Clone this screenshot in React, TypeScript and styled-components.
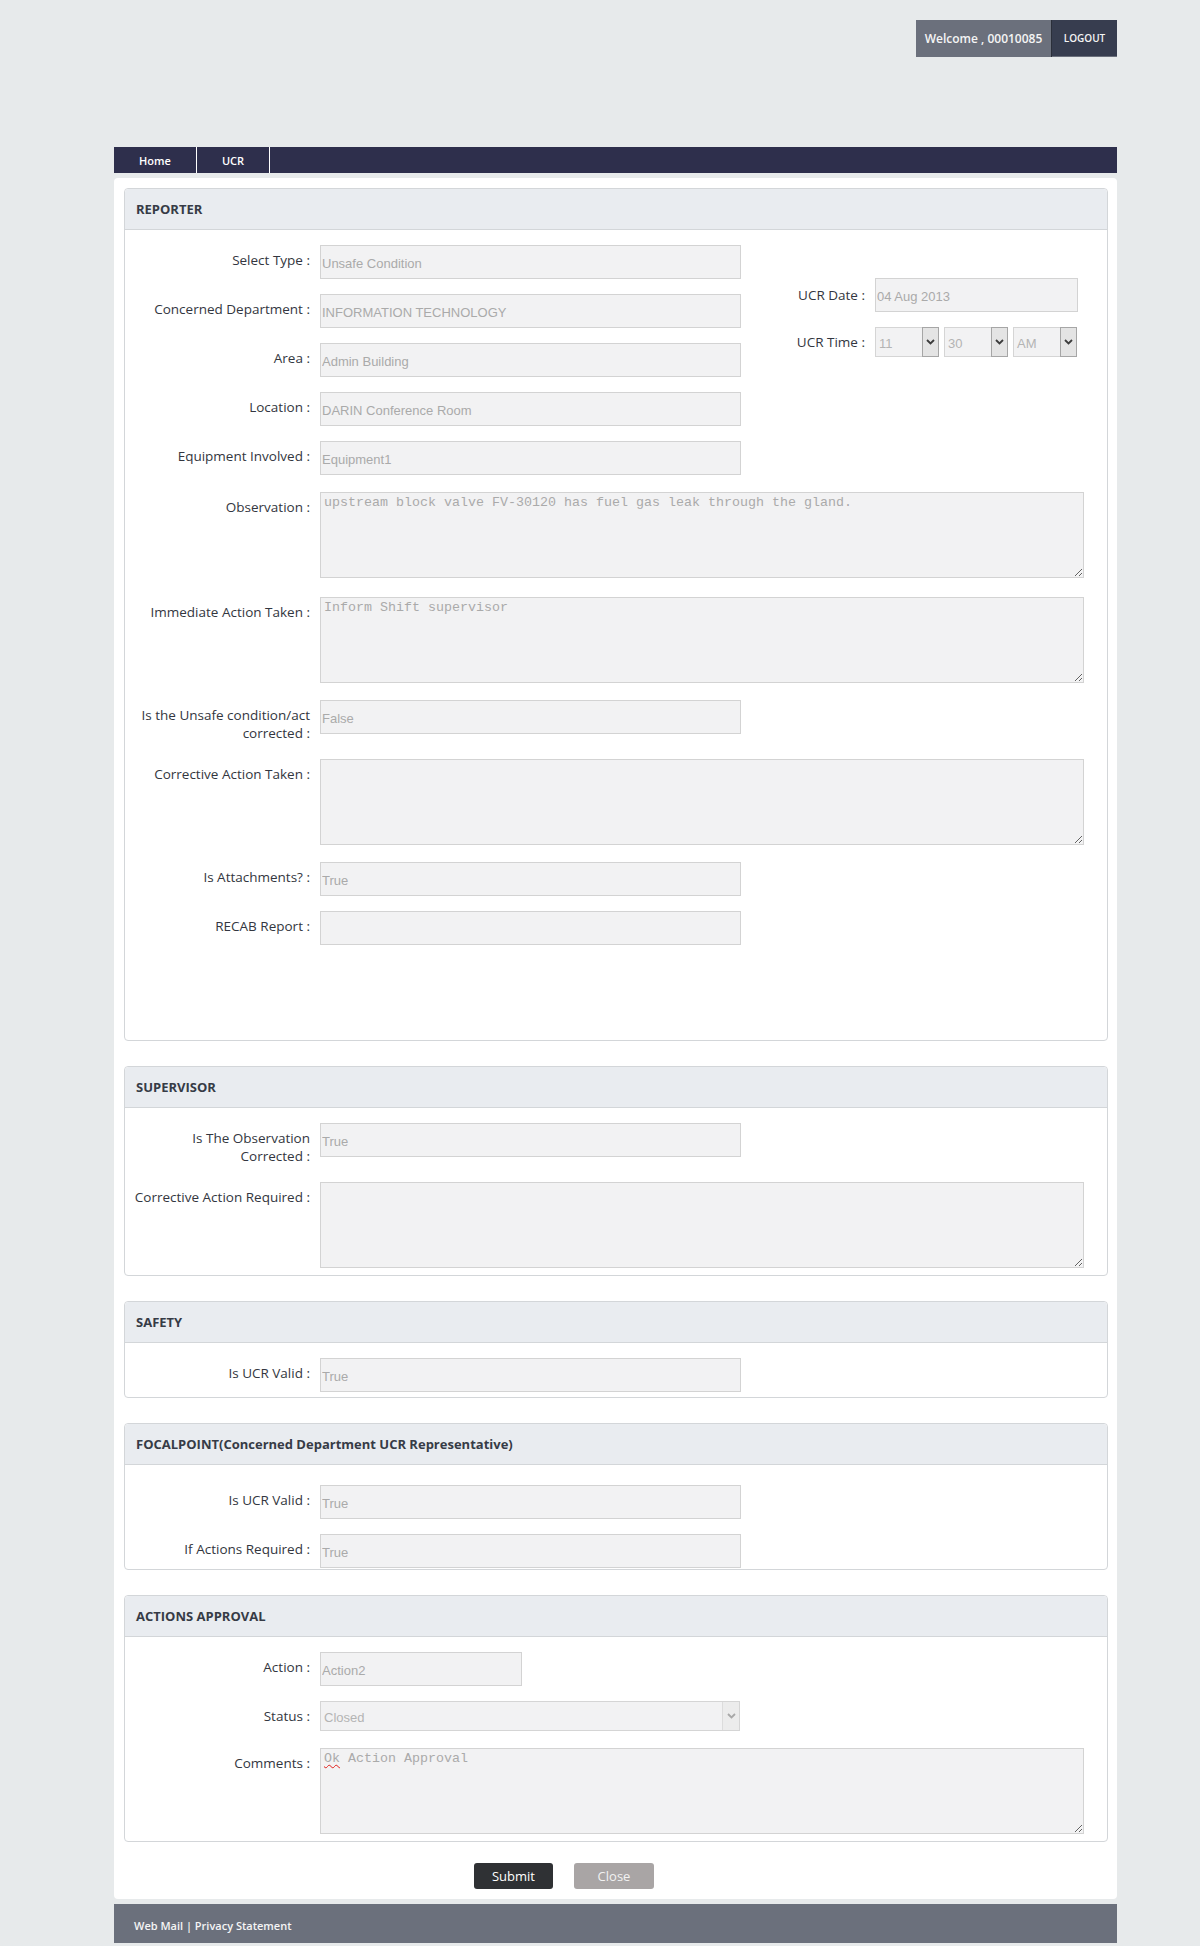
import styled, { createGlobalStyle } from 'styled-components';

const GlobalStyle = createGlobalStyle`
    body {
        margin: 0;
        background: #e7eaeb;
        font-family: 'Open Sans', 'Liberation Sans', sans-serif;
    }
`;

const StyledPage = styled.div`
    width: 1003px;
    margin-left: 114px;
    padding: 20px 0 3px;
`;

const StyledTopBar = styled.div`
    display: flex;
    justify-content: flex-end;
    height: 37px;
    margin-bottom: 90px;
`;

const StyledWelcome = styled.div`
    width: 135px;
    background: #6b707c;
    color: #f5f5f5;
    font-size: 12px;
    font-weight: 600;
    line-height: 37px;
    text-align: center;
    border-right: 1px solid #2b2f3a;
`;

const StyledLogout = styled.div`
    width: 65px;
    background: #373d4f;
    color: #f5f5f5;
    font-size: 10px;
    font-weight: 600;
    line-height: 37px;
    text-align: center;
    box-sizing: border-box;
    border-bottom: 1px solid #6b707c;
`;

const StyledNav = styled.div`
    display: flex;
    height: 26px;
    background: #2e2f4c;
`;

const StyledTab = styled.div<{ $width: number }>`
    width: ${(p) => p.$width}px;
    box-sizing: border-box;
    border-right: 1px solid #ffffff;
    color: #ffffff;
    font-size: 11px;
    font-weight: 600;
    display: flex;
    align-items: center;
    justify-content: center;
`;

const StyledPanel = styled.div`
    margin-top: 5px;
    background: #ffffff;
    border-radius: 4px;
    padding: 10px 9px 10px 10px;
`;

const StyledSectionStack = styled.div`
    display: flex;
    flex-direction: column;
    gap: 25px;
`;

const StyledSection = styled.div`
    border: 1px solid #d3d6d9;
    border-radius: 4px;
`;

const StyledSectionHeader = styled.div`
    height: 40px;
    line-height: 40px;
    background: #e9ecf0;
    border-bottom: 1px solid #d3d6d9;
    border-radius: 4px 4px 0 0;
    padding-left: 11px;
    color: #363b46;
    font-size: 13px;
    font-weight: 700;
`;

const StyledSectionBody = styled.div<{ $top?: number; $bottom?: number }>`
    display: flex;
    flex-direction: column;
    gap: 15px;
    padding-top: ${(p) => p.$top ?? 15}px;
    padding-bottom: ${(p) => p.$bottom ?? 5}px;
`;

const StyledTopArea = styled.div`
    display: flex;
`;

const StyledColumn = styled.div`
    display: flex;
    flex-direction: column;
    gap: 15px;
`;

const StyledSideColumn = styled.div`
    display: flex;
    flex-direction: column;
    gap: 15px;
    margin-left: 44px;
    padding-top: 33px;
`;

const StyledRow = styled.div<{ $tall?: boolean }>`
    display: flex;
    align-items: flex-start;
    margin: ${(p) => (p.$tall ? '2px 0 2px' : '0')};
`;

const StyledSideRow = styled.div`
    display: flex;
    align-items: center;
`;

const StyledLabel = styled.div`
    width: 185px;
    flex: 0 0 185px;
    padding: 6px 10px 0 0;
    text-align: right;
    white-space: nowrap;
    color: #333640;
    font-size: 13.5px;
    line-height: 18px;
`;

const StyledSideLabel = styled.div`
    width: 80px;
    padding-right: 10px;
    text-align: right;
    white-space: nowrap;
    color: #333640;
    font-size: 13.5px;
`;

const StyledInput = styled.input<{ $width?: number }>`
    box-sizing: border-box;
    width: ${(p) => p.$width ?? 421}px;
    height: 34px;
    margin: 0;
    padding: 2px 0 0 1px;
    background: #f2f2f3;
    border: 1px solid #d3d3d3;
    color: #aaaaaa;
    font-family: 'Liberation Sans', Arial, sans-serif;
    font-size: 13px;
    outline: none;
`;

const StyledAreaWrap = styled.div`
    position: relative;
`;

const StyledTextArea = styled.textarea`
    display: block;
    box-sizing: border-box;
    width: 764px;
    height: 86px;
    margin: 0;
    padding: 2px 3px;
    background: #f2f2f3;
    border: 1px solid #d3d3d3;
    color: #aaaaaa;
    font-family: 'Liberation Mono', 'Courier New', monospace;
    font-size: 13.33px;
    outline: none;
`;

/* spell-check squiggle drawn over the first word of a textarea */
const StyledSquiggle = styled.span`
    position: absolute;
    left: 4px;
    top: 3px;
    color: transparent;
    font-family: 'Liberation Mono', 'Courier New', monospace;
    font-size: 13.33px;
    line-height: normal;
    text-decoration: underline wavy #e0201c;
    text-decoration-thickness: 1px;
    text-underline-offset: 2px;
    pointer-events: none;
`;

const StyledSelect = styled.div<{ $width: number; $height: number }>`
    display: flex;
    box-sizing: border-box;
    width: ${(p) => p.$width}px;
    height: ${(p) => p.$height}px;
    background: #f2f2f3;
    border: 1px solid #d5d5d5;
    color: #b4b4b4;
    font-family: 'Liberation Sans', Arial, sans-serif;
    font-size: 13px;
`;

const StyledSelectValue = styled.span`
    flex: 1;
    display: flex;
    align-items: center;
    padding: 2px 0 0 3px;
`;

const StyledArrowBox = styled.span<{ $active?: boolean }>`
    width: 17px;
    box-sizing: border-box;
    display: flex;
    align-items: center;
    justify-content: center;
    background: ${(p) => (p.$active ? '#e4e4e4' : '#ececec')};
    color: ${(p) => (p.$active ? '#3c3c3c' : '#a8a8a8')};
    ${(p) =>
        p.$active
            ? 'border: 1px solid #a6a6a6; margin: -1px -1px -1px 0;'
            : 'border-left: 1px solid #dcdcdc;'}
`;

const StyledTimeGroup = styled.div`
    display: flex;
    gap: 5px;
`;

const StyledButtonRow = styled.div`
    display: flex;
    gap: 21px;
    margin-top: 21px;
    padding-left: 350px;
`;

const StyledButton = styled.button<{ $dark?: boolean }>`
    width: ${(p) => (p.$dark ? 79 : 80)}px;
    height: 26px;
    border: none;
    border-radius: 3px;
    background: ${(p) => (p.$dark ? '#2f3134' : '#a9a5a5')};
    color: ${(p) => (p.$dark ? '#ffffff' : '#f2f2f2')};
    font-family: 'Open Sans', sans-serif;
    font-size: 13px;
    padding: 0;
`;

const StyledFooter = styled.div`
    margin-top: 5px;
    height: 39px;
    box-sizing: border-box;
    padding: 14px 0 0 20px;
    background: #6b707c;
    color: #f5f5f5;
    font-size: 11px;
    font-weight: 600;
`;

const Chevron = () => (
    <svg width="9" height="6" viewBox="0 0 9 6">
        <path d="M1 1 L4.5 4.5 L8 1" fill="none" stroke="currentColor" strokeWidth="1.8" />
    </svg>
);

const Select = ({ value, width, height, active }: { value: string; width: number; height: number; active?: boolean }) => (
    <StyledSelect $width={width} $height={height}>
        <StyledSelectValue>{value}</StyledSelectValue>
        <StyledArrowBox $active={active}>
            <Chevron />
        </StyledArrowBox>
    </StyledSelect>
);

const Field = ({ label, value, width }: { label: React.ReactNode; value: string; width?: number }) => (
    <StyledRow>
        <StyledLabel>{label}</StyledLabel>
        <StyledInput readOnly value={value} $width={width} />
    </StyledRow>
);

const AreaField = ({ label, value, misspelled }: { label: React.ReactNode; value: string; misspelled?: string }) => (
    <StyledRow $tall>
        <StyledLabel>{label}</StyledLabel>
        <StyledAreaWrap>
            <StyledTextArea readOnly value={value} />
            {misspelled && <StyledSquiggle>{misspelled}</StyledSquiggle>}
        </StyledAreaWrap>
    </StyledRow>
);

const App = () => {
    return (
        <StyledPage>
            <GlobalStyle />
            <StyledTopBar>
                <StyledWelcome>Welcome , 00010085</StyledWelcome>
                <StyledLogout>LOGOUT</StyledLogout>
            </StyledTopBar>
            <StyledNav>
                <StyledTab $width={83}>Home</StyledTab>
                <StyledTab $width={73}>UCR</StyledTab>
            </StyledNav>
            <StyledPanel>
                <StyledSectionStack>
                    <StyledSection>
                        <StyledSectionHeader>REPORTER</StyledSectionHeader>
                        <StyledSectionBody $bottom={95}>
                            <StyledTopArea>
                                <StyledColumn>
                                    <Field label="Select Type :" value="Unsafe Condition" />
                                    <Field label="Concerned Department :" value="INFORMATION TECHNOLOGY" />
                                    <Field label="Area :" value="Admin Building" />
                                    <Field label="Location :" value="DARIN Conference Room" />
                                    <Field label="Equipment Involved :" value="Equipment1" />
                                </StyledColumn>
                                <StyledSideColumn>
                                    <StyledSideRow>
                                        <StyledSideLabel>UCR Date :</StyledSideLabel>
                                        <StyledInput readOnly value="04 Aug 2013" $width={203} />
                                    </StyledSideRow>
                                    <StyledSideRow>
                                        <StyledSideLabel>UCR Time :</StyledSideLabel>
                                        <StyledTimeGroup>
                                            <Select value="11" width={64} height={30} active />
                                            <Select value="30" width={64} height={30} active />
                                            <Select value="AM" width={64} height={30} active />
                                        </StyledTimeGroup>
                                    </StyledSideRow>
                                </StyledSideColumn>
                            </StyledTopArea>
                            <AreaField
                                label="Observation :"
                                value="upstream block valve FV-30120 has fuel gas leak through the gland."
                            />
                            <AreaField label="Immediate Action Taken :" value="Inform Shift supervisor" />
                            <Field
                                label={
                                    <>
                                        Is the Unsafe condition/act
                                        <br />
                                        corrected :
                                    </>
                                }
                                value="False"
                            />
                            <AreaField label="Corrective Action Taken :" value="" />
                            <Field label="Is Attachments? :" value="True" />
                            <Field label="RECAB Report :" value="" />
                        </StyledSectionBody>
                    </StyledSection>

                    <StyledSection>
                        <StyledSectionHeader>SUPERVISOR</StyledSectionHeader>
                        <StyledSectionBody>
                            <Field
                                label={
                                    <>
                                        Is The Observation
                                        <br />
                                        Corrected :
                                    </>
                                }
                                value="True"
                            />
                            <AreaField label="Corrective Action Required :" value="" />
                        </StyledSectionBody>
                    </StyledSection>

                    <StyledSection>
                        <StyledSectionHeader>SAFETY</StyledSectionHeader>
                        <StyledSectionBody>
                            <Field label="Is UCR Valid :" value="True" />
                        </StyledSectionBody>
                    </StyledSection>

                    <StyledSection>
                        <StyledSectionHeader>FOCALPOINT(Concerned Department UCR Representative)</StyledSectionHeader>
                        <StyledSectionBody $top={20} $bottom={1}>
                            <Field label="Is UCR Valid :" value="True" />
                            <Field label="If Actions Required :" value="True" />
                        </StyledSectionBody>
                    </StyledSection>

                    <StyledSection>
                        <StyledSectionHeader>ACTIONS APPROVAL</StyledSectionHeader>
                        <StyledSectionBody>
                            <Field label="Action :" value="Action2" width={202} />
                            <StyledRow>
                                <StyledLabel>Status :</StyledLabel>
                                <Select value="Closed" width={420} height={30} />
                            </StyledRow>
                            <AreaField label="Comments :" value="Ok Action Approval" misspelled="Ok" />
                        </StyledSectionBody>
                    </StyledSection>
                </StyledSectionStack>

                <StyledButtonRow>
                    <StyledButton $dark>Submit</StyledButton>
                    <StyledButton>Close</StyledButton>
                </StyledButtonRow>
            </StyledPanel>
            <StyledFooter>Web Mail | Privacy Statement</StyledFooter>
        </StyledPage>
    );
};

export default App;
